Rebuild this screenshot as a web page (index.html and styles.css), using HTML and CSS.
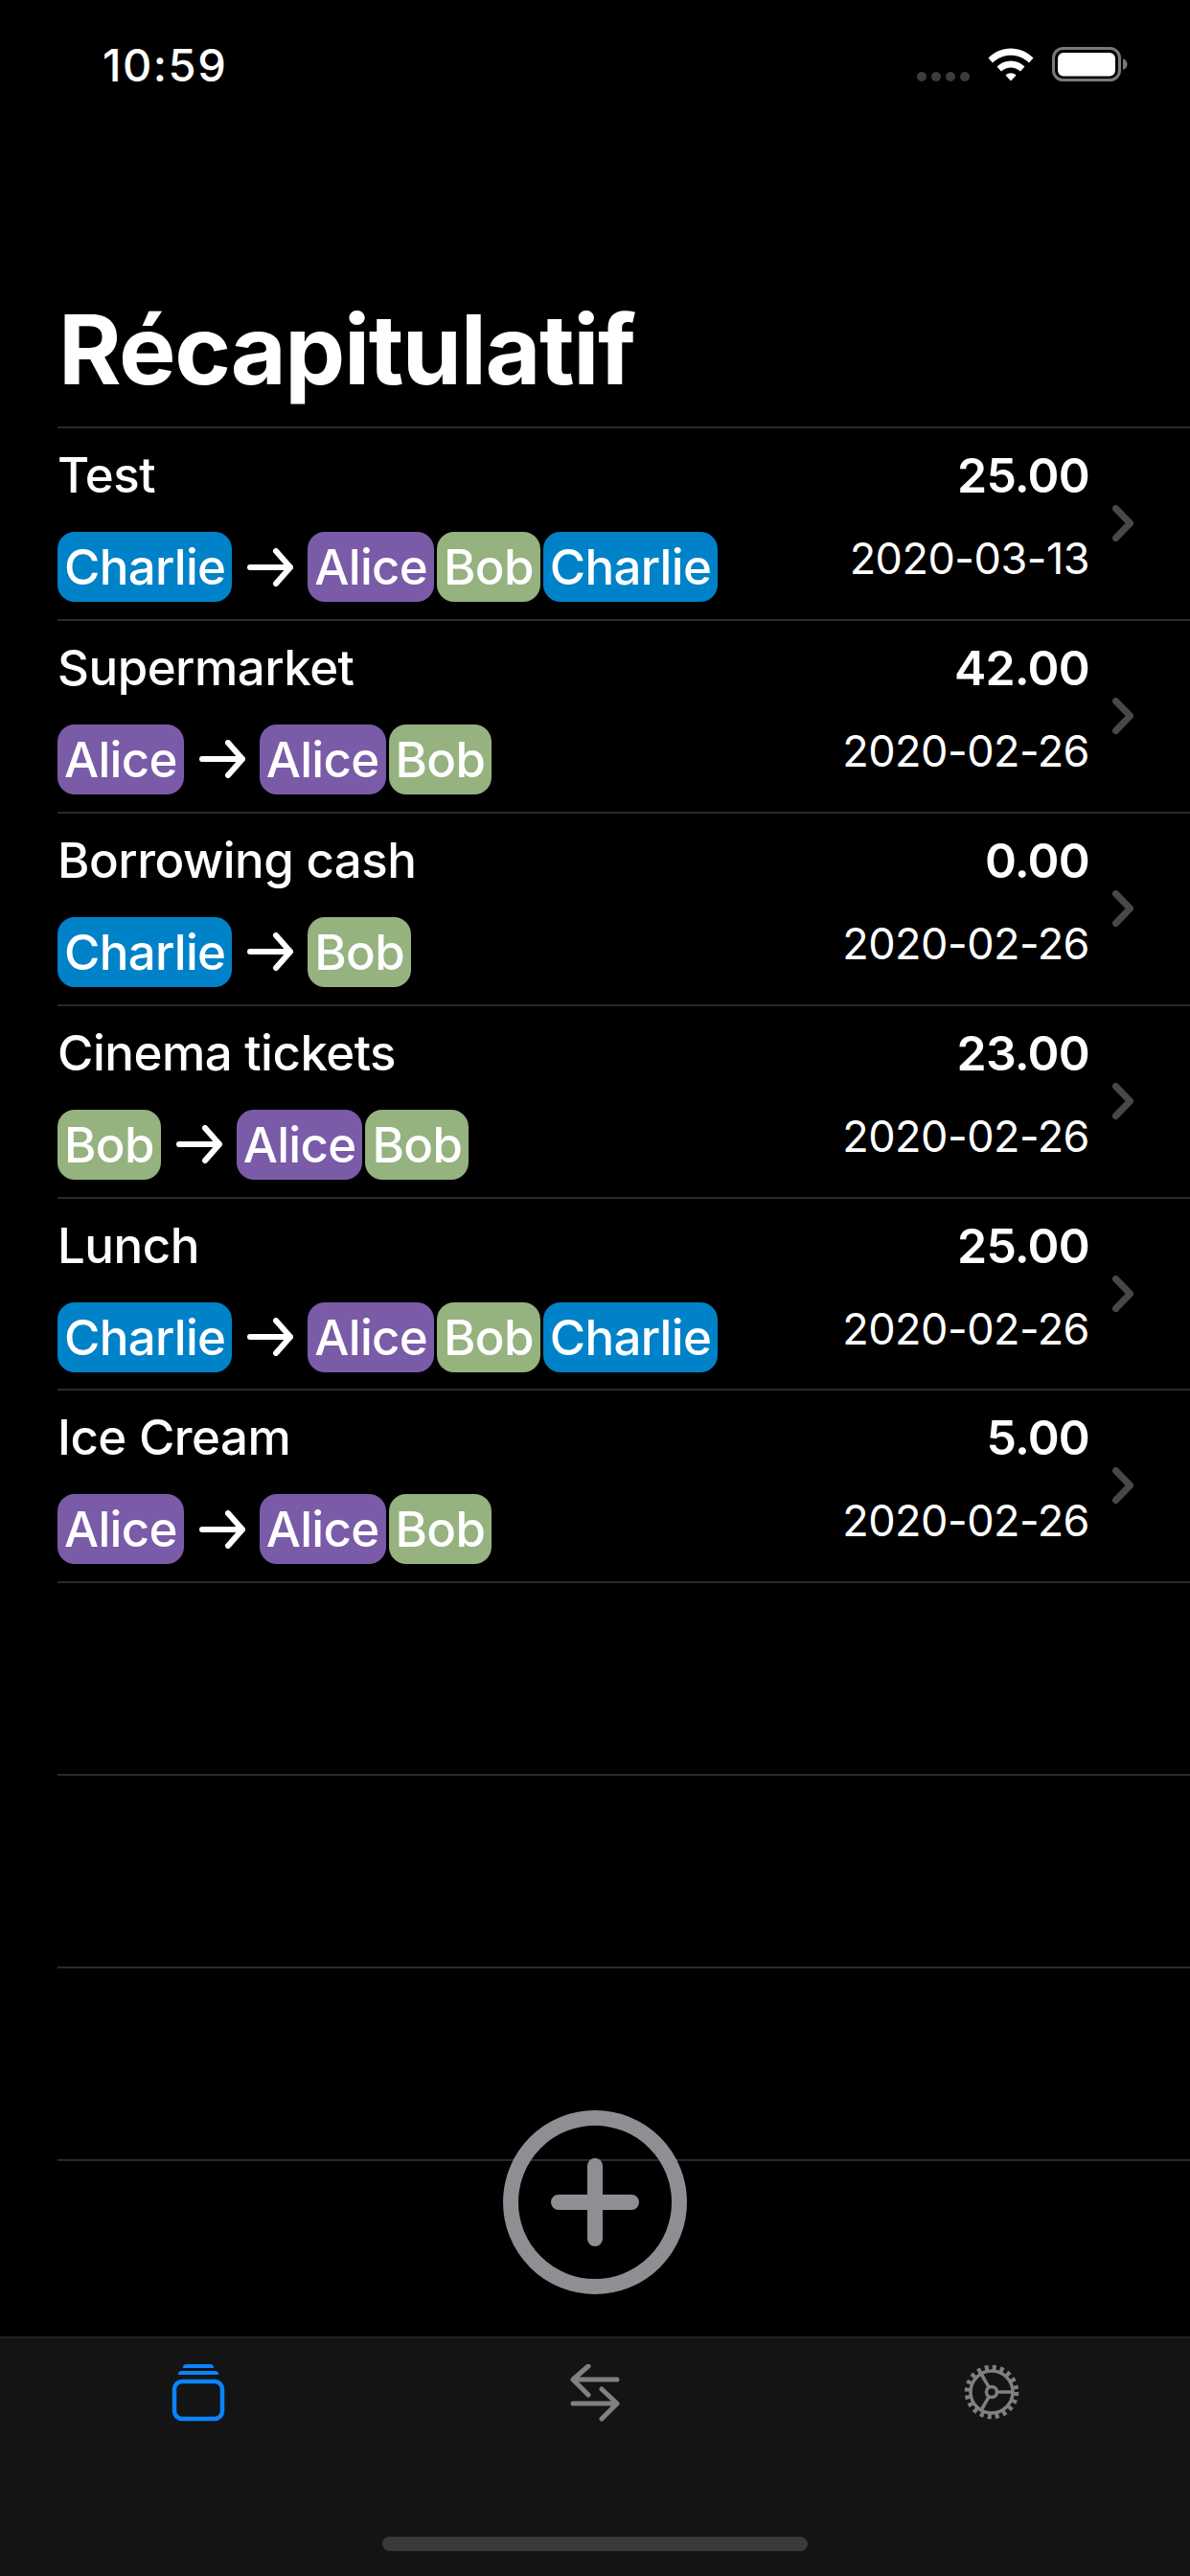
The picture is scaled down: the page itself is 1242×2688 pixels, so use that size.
FILE: index.html
```html
<!DOCTYPE html>
<html>
	<head>
		<meta charset="utf-8">
		<title>Récapitulatif</title>
		<link rel="stylesheet" href="styles.css">
	</head>
	<body>
		<div id="screen">
			<div class="status">
				<span class="time">10:59</span>
				<div class="status-icons">
					<svg class="signal" width="55" height="10" viewBox="0 0 55 10">
						<rect x="0" y="0" width="10" height="10" rx="5"/>
						<rect x="15" y="0" width="10" height="10" rx="5"/>
						<rect x="30" y="0" width="10" height="10" rx="5"/>
						<rect x="45" y="0" width="10" height="10" rx="5"/>
					</svg>
					<svg class="wifi" width="48" height="36" viewBox="0 0 48 36">
						<path d="M0.5 11.5 C13 -2 35 -2 47.5 11.5 L43 16.5 C32.5 6 15.5 6 5 16.5 Z"/>
						<path d="M9.5 20.5 C17.5 12.5 30.5 12.5 38.5 20.5 L34 25.5 C28 20 20 20 14 25.5 Z"/>
						<path d="M18.5 29.5 C21.5 26.5 26.5 26.5 29.5 29.5 L24 35.5 Z"/>
					</svg>
					<svg class="battery" width="79" height="36" viewBox="0 0 79 36">
						<rect x="1.5" y="1.5" width="69" height="33" rx="10" fill="none" stroke="#7a7a7a" stroke-width="3"/>
						<rect x="6" y="6" width="60" height="24.5" rx="6" fill="#fff"/>
						<path d="M74 12 C77 13.5 78.5 15.5 78.5 18 C78.5 20.5 77 22.5 74 24 Z" fill="#7a7a7a"/>
					</svg>
				</div>
			</div>

			<h1 class="title">Récapitulatif</h1>

			<div class="list">
				<div class="row">
					<div class="left">
						<div class="name">Test</div>
						<div class="tags">
							<span class="tag blue">Charlie</span>
							<svg class="arrow" width="48" height="40" viewBox="0 0 48 40"><path d="M3 20 H45 M30 3 L45 20 L30 37"/></svg>
							<div class="group">
								<span class="tag purple">Alice</span>
								<span class="tag green">Bob</span>
								<span class="tag blue">Charlie</span>
							</div>
						</div>
					</div>
					<div class="right">
						<div class="amount">25.00</div>
						<div class="date">2020-03-13</div>
					</div>
					<svg class="chevron" width="22" height="38" viewBox="0 0 22 38"><path d="M3.5 3.5 L18.5 19 L3.5 34.5"/></svg>
				</div>
				<div class="row">
					<div class="left">
						<div class="name">Supermarket</div>
						<div class="tags">
							<span class="tag purple">Alice</span>
							<svg class="arrow" width="48" height="40" viewBox="0 0 48 40"><path d="M3 20 H45 M30 3 L45 20 L30 37"/></svg>
							<div class="group">
								<span class="tag purple">Alice</span>
								<span class="tag green">Bob</span>
							</div>
						</div>
					</div>
					<div class="right">
						<div class="amount">42.00</div>
						<div class="date">2020-02-26</div>
					</div>
					<svg class="chevron" width="22" height="38" viewBox="0 0 22 38"><path d="M3.5 3.5 L18.5 19 L3.5 34.5"/></svg>
				</div>
				<div class="row">
					<div class="left">
						<div class="name">Borrowing cash</div>
						<div class="tags">
							<span class="tag blue">Charlie</span>
							<svg class="arrow" width="48" height="40" viewBox="0 0 48 40"><path d="M3 20 H45 M30 3 L45 20 L30 37"/></svg>
							<div class="group">
								<span class="tag green">Bob</span>
							</div>
						</div>
					</div>
					<div class="right">
						<div class="amount">0.00</div>
						<div class="date">2020-02-26</div>
					</div>
					<svg class="chevron" width="22" height="38" viewBox="0 0 22 38"><path d="M3.5 3.5 L18.5 19 L3.5 34.5"/></svg>
				</div>
				<div class="row">
					<div class="left">
						<div class="name">Cinema tickets</div>
						<div class="tags">
							<span class="tag green">Bob</span>
							<svg class="arrow" width="48" height="40" viewBox="0 0 48 40"><path d="M3 20 H45 M30 3 L45 20 L30 37"/></svg>
							<div class="group">
								<span class="tag purple">Alice</span>
								<span class="tag green">Bob</span>
							</div>
						</div>
					</div>
					<div class="right">
						<div class="amount">23.00</div>
						<div class="date">2020-02-26</div>
					</div>
					<svg class="chevron" width="22" height="38" viewBox="0 0 22 38"><path d="M3.5 3.5 L18.5 19 L3.5 34.5"/></svg>
				</div>
				<div class="row">
					<div class="left">
						<div class="name">Lunch</div>
						<div class="tags">
							<span class="tag blue">Charlie</span>
							<svg class="arrow" width="48" height="40" viewBox="0 0 48 40"><path d="M3 20 H45 M30 3 L45 20 L30 37"/></svg>
							<div class="group">
								<span class="tag purple">Alice</span>
								<span class="tag green">Bob</span>
								<span class="tag blue">Charlie</span>
							</div>
						</div>
					</div>
					<div class="right">
						<div class="amount">25.00</div>
						<div class="date">2020-02-26</div>
					</div>
					<svg class="chevron" width="22" height="38" viewBox="0 0 22 38"><path d="M3.5 3.5 L18.5 19 L3.5 34.5"/></svg>
				</div>
				<div class="row">
					<div class="left">
						<div class="name">Ice Cream</div>
						<div class="tags">
							<span class="tag purple">Alice</span>
							<svg class="arrow" width="48" height="40" viewBox="0 0 48 40"><path d="M3 20 H45 M30 3 L45 20 L30 37"/></svg>
							<div class="group">
								<span class="tag purple">Alice</span>
								<span class="tag green">Bob</span>
							</div>
						</div>
					</div>
					<div class="right">
						<div class="amount">5.00</div>
						<div class="date">2020-02-26</div>
					</div>
					<svg class="chevron" width="22" height="38" viewBox="0 0 22 38"><path d="M3.5 3.5 L18.5 19 L3.5 34.5"/></svg>
				</div>
				<div class="row"></div>
				<div class="row"></div>
				<div class="row"></div>
			</div>

			<svg id="add" width="192" height="192" viewBox="0 0 192 192">
				<circle cx="96" cy="96" r="88"/>
				<path d="M96 58 V134 M58 96 H134"/>
			</svg>

			<div class="tabbar">
				<svg class="tab" width="56" height="60" viewBox="0 0 56 60">
					<rect x="3" y="18" width="50" height="39" rx="8" fill="none" stroke="#0a84ff" stroke-width="4.5"/>
					<path d="M7 10 Q7 7 11 7 H45 Q49 7 49 10 V11 H7 Z M12 3 Q12 0 16 0 H40 Q44 0 44 3 V4 H12 Z" fill="#0a84ff"/>
				</svg>
				<svg class="tab" width="52" height="60" viewBox="0 0 52 60">
					<g fill="none" stroke="#808080" stroke-width="5" stroke-linecap="round" stroke-linejoin="round">
						<path d="M49 16 H3 M19 2 L3 16 L19 32"/>
						<path d="M3 41 H49 M33 26 L49 41 L33 57"/>
					</g>
				</svg>
				<svg class="tab" width="58" height="58" viewBox="0 0 58 58">
					<g fill="none" stroke="#808080" stroke-width="3.5">
						<circle cx="29" cy="29" r="22"/>
						<circle cx="29" cy="29" r="5.5"/>
						<path d="M34.5 29 H51 M26.2 24.2 L18 10 M26.2 33.8 L18 48"/>
						<circle cx="29" cy="29" r="25.5" stroke-width="5.5" stroke-dasharray="4 4.01"/>
					</g>
				</svg>
			</div>
			<div id="home"></div>
		</div>
	</body>
</html>
```

FILE: styles.css
```css
* {
	box-sizing: border-box;
}

html, body {
	margin: 0;
	background: #000;
}

#screen {
	position: relative;
	width: 1242px;
	height: 2688px;
	overflow: hidden;
	display: flex;
	flex-direction: column;
	background: #000;
	color: #fff;
	font-family: Inter, "Liberation Sans", sans-serif;
}

.status {
	height: 132px;
	padding: 44px 65px 0 107px;
	display: flex;
	justify-content: space-between;
	align-items: flex-start;
}

.time {
	font-size: 47px;
	line-height: 48px;
	font-weight: 500;
	letter-spacing: 1.5px;
}

.status-icons {
	display: flex;
	align-items: flex-end;
	gap: 19px;
	padding-top: 5px;
}

.signal {
	fill: #3c3c3c;
}

.wifi {
	fill: #fff;
}

.title {
	margin: 0;
	padding: 173px 0 0 61px;
	height: 313px;
	font-size: 100px;
	line-height: 120px;
	font-weight: 700;
	letter-spacing: -1.4px;
}

.list {
	margin-left: 60px;
	border-top: 2px solid #2a2a2c;
}

.row {
	height: 200.9px;
	padding-right: 59px;
	display: flex;
	align-items: stretch;
	border-bottom: 2px solid #2a2a2c;
}

.left {
	flex: 1;
	min-width: 0;
}

.name {
	height: 108px;
	padding-top: 19px;
	font-size: 51px;
	line-height: 60px;
	font-weight: 500;
	letter-spacing: -0.5px;
}

.tags {
	display: flex;
	align-items: center;
}

.group {
	display: flex;
	gap: 3px;
}

.tag {
	height: 73px;
	padding: 0 7px;
	border-radius: 18px;
	font-size: 51px;
	line-height: 74px;
	font-weight: 500;
	letter-spacing: -0.7px;
}

.blue {
	background: #0082c9;
}

.purple {
	background: #7a5ba8;
}

.green {
	background: #95b27f;
}

.arrow {
	margin: 0 15px 0 16px;
}

.arrow path {
	fill: none;
	stroke: #fff;
	stroke-width: 6;
	stroke-linecap: round;
	stroke-linejoin: round;
}

.right {
	margin-right: 24px;
	text-align: right;
}

.amount {
	height: 108px;
	padding-top: 19px;
	font-size: 50px;
	line-height: 60px;
	font-weight: 600;
	letter-spacing: -0.8px;
}

.date {
	font-size: 45px;
	line-height: 56px;
	font-weight: 400;
	letter-spacing: -0.5px;
}

.chevron {
	align-self: center;
	margin-top: -1px;
}

.chevron path {
	fill: none;
	stroke: #48484a;
	stroke-width: 7;
	stroke-linecap: round;
	stroke-linejoin: round;
}

#add {
	position: absolute;
	left: 525px;
	top: 2202px;
}

#add circle {
	fill: none;
	stroke: #8e8e93;
	stroke-width: 16;
}

#add path {
	fill: none;
	stroke: #8e8e93;
	stroke-width: 16;
	stroke-linecap: round;
}

.tabbar {
	position: absolute;
	left: 0;
	right: 0;
	top: 2438px;
	bottom: 0;
	padding-top: 27px;
	display: grid;
	grid-template-columns: repeat(3, 1fr);
	justify-items: center;
	align-items: start;
	background: #141414;
	border-top: 2px solid #232323;
}

#home {
	position: absolute;
	left: 399px;
	top: 2647px;
	width: 444px;
	height: 15px;
	border-radius: 8px;
	background: #3a3a3a;
}
```
